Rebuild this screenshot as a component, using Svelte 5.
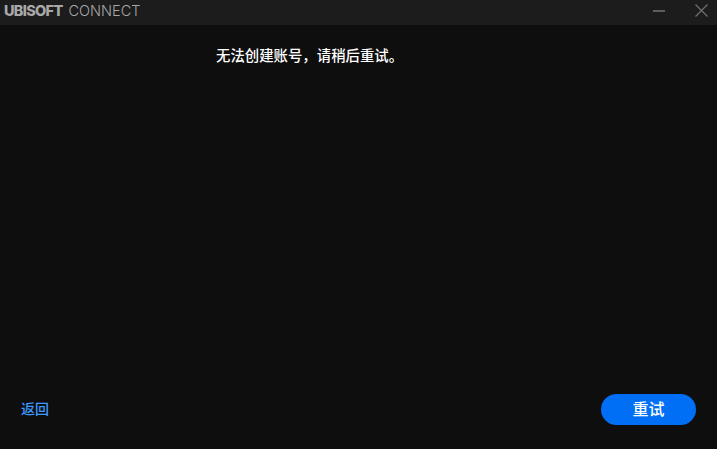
<script>
  const message = '无法创建账号\uFF0C请稍后重试。'
</script>

<div class="window">
  <header class="titlebar">
    <div class="brand"><span class="brand-bold">UBISOFT</span><span class="brand-light">CONNECT</span></div>
    <div class="window-controls">
      <svg class="icon-min" width="12" height="2" viewBox="0 0 12 2"><path d="M0 1H12" stroke="#8a8a8a" stroke-width="1.2" /></svg>
      <svg class="icon-close" width="13" height="13" viewBox="0 0 13 13"><path d="M0.5 0.5L12.5 12.5M12.5 0.5L0.5 12.5" stroke="#6f6f6f" stroke-width="1.3" fill="none" /></svg>
    </div>
  </header>

  <main class="content">
    <p class="message">{message}</p>
  </main>

  <footer class="actions">
    <button class="back">返回</button>
    <button class="retry">重试</button>
  </footer>
</div>

<style>
  :global(body) {
    margin: 0;
    background: #0e0e0e;
  }

  .window {
    display: flex;
    flex-direction: column;
    width: 717px;
    height: 449px;
    overflow: hidden;
    background: #0e0e0e;
    font-family: "Noto Sans CJK SC", "Liberation Sans", sans-serif;
  }

  .titlebar {
    display: flex;
    align-items: center;
    justify-content: space-between;
    flex: none;
    height: 25px;
    padding: 0 9px 4px 4px;
    box-sizing: border-box;
    background: #1c1c1c;
  }

  .brand {
    display: flex;
    align-items: baseline;
    gap: 6px;
    font-family: Inter, "Liberation Sans", sans-serif;
    font-size: 14.5px;
    line-height: 21px;
    color: #a8a8a8;
  }

  .brand-bold {
    font-weight: 800;
    letter-spacing: -0.7px;
  }

  .brand-light {
    font-weight: 300;
  }

  .window-controls {
    display: flex;
    align-items: center;
    gap: 30px;
  }

  .icon-min {
    display: block;
  }

  .icon-close {
    display: block;
  }

  .content {
    flex: 1;
    padding: 19px 0 0 216px;
  }

  .message {
    margin: 0;
    font-size: 14.4px;
    line-height: 22px;
    font-weight: 500;
    color: #ffffff;
  }

  .actions {
    display: flex;
    align-items: center;
    justify-content: space-between;
    flex: none;
    padding: 0 21px 24px;
  }

  button {
    border: none;
    padding: 0 0 3px;
    font-family: inherit;
    cursor: pointer;
  }

  .back {
    background: none;
    font-size: 14px;
    font-weight: 500;
    color: #3d9bff;
  }

  .retry {
    width: 95px;
    height: 31px;
    border-radius: 16px;
    background: #006ef5;
    font-size: 16px;
    font-weight: 500;
    color: #ffffff;
  }
</style>
